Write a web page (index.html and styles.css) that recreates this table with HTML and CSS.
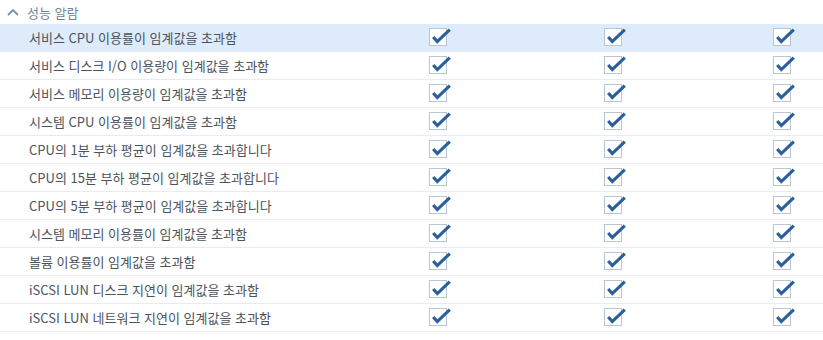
FILE: index.html
```html
<!DOCTYPE html>
<html lang="ko">
<head>
<meta charset="utf-8">
<link rel="stylesheet" href="styles.css">
</head>
<body>
<div class="section">
  <div class="section-head">
    <svg class="chev" width="12" height="8" viewBox="0 0 12 8"><path d="M1 7 L6 2 L11 7" fill="none" stroke="#7d90a6" stroke-width="1.8"/></svg>
    <span>성능 알람</span>
  </div>
  <div class="rows" id="rows"></div>
</div>
<template id="cb">
  <svg class="cb" width="24" height="20" viewBox="0 0 24 20"><rect x="0.5" y="1.5" width="17" height="17" fill="#fff" stroke="#bac5d4"/><path d="M4.2 10 L8.3 14.6 L20.8 2.6" fill="none" stroke="#2b5e9d" stroke-width="3.1" stroke-linecap="butt" stroke-linejoin="miter"/></svg>
</template>
<script>
const items = [
  "서비스 CPU 이용률이 임계값을 초과함",
  "서비스 디스크 I/O 이용량이 임계값을 초과함",
  "서비스 메모리 이용량이 임계값을 초과함",
  "시스템 CPU 이용률이 임계값을 초과함",
  "CPU의 1분 부하 평균이 임계값을 초과합니다",
  "CPU의 15분 부하 평균이 임계값을 초과합니다",
  "CPU의 5분 부하 평균이 임계값을 초과합니다",
  "시스템 메모리 이용률이 임계값을 초과함",
  "볼륨 이용률이 임계값을 초과함",
  "iSCSI LUN 디스크 지연이 임계값을 초과함",
  "iSCSI LUN 네트워크 지연이 임계값을 초과함"
];
const rows = document.getElementById('rows');
const tpl = document.getElementById('cb').innerHTML;
items.forEach((t, i) => {
  const r = document.createElement('div');
  r.className = 'row' + (i === 0 ? ' active' : '');
  r.innerHTML = '<div class="name">' + t + '</div>' +
    '<div class="cell">' + tpl + '</div>' +
    '<div class="cell">' + tpl + '</div>' +
    '<div class="cell">' + tpl + '</div>';
  rows.appendChild(r);
});
</script>
</body>
</html>
```
FILE: styles.css
```css
html, body {
  margin: 0;
  padding: 0;
  background: #fff;
}
body {
  font-family: "Noto Sans CJK KR", "Noto Sans", sans-serif;
  font-size: 13px;
  color: #4a535e;
}
.section-head {
  height: 24px;
  display: flex;
  align-items: center;
  padding-left: 7px;
  gap: 8px;
  color: #6f8399;
  font-size: 13px;
}
.chev {
  display: block;
}
.row {
  display: grid;
  grid-template-columns: 429px 175px 169px 1fr;
  height: 27px;
  border-bottom: 1px solid #e7ecf2;
  align-items: center;
}
.row.active {
  background: #deebfa;
}
.name {
  padding-left: 29px;
  white-space: nowrap;
}
.cell {
  display: flex;
  align-items: center;
}
.cb {
  display: block;
  margin-top: -2px;
}
```
